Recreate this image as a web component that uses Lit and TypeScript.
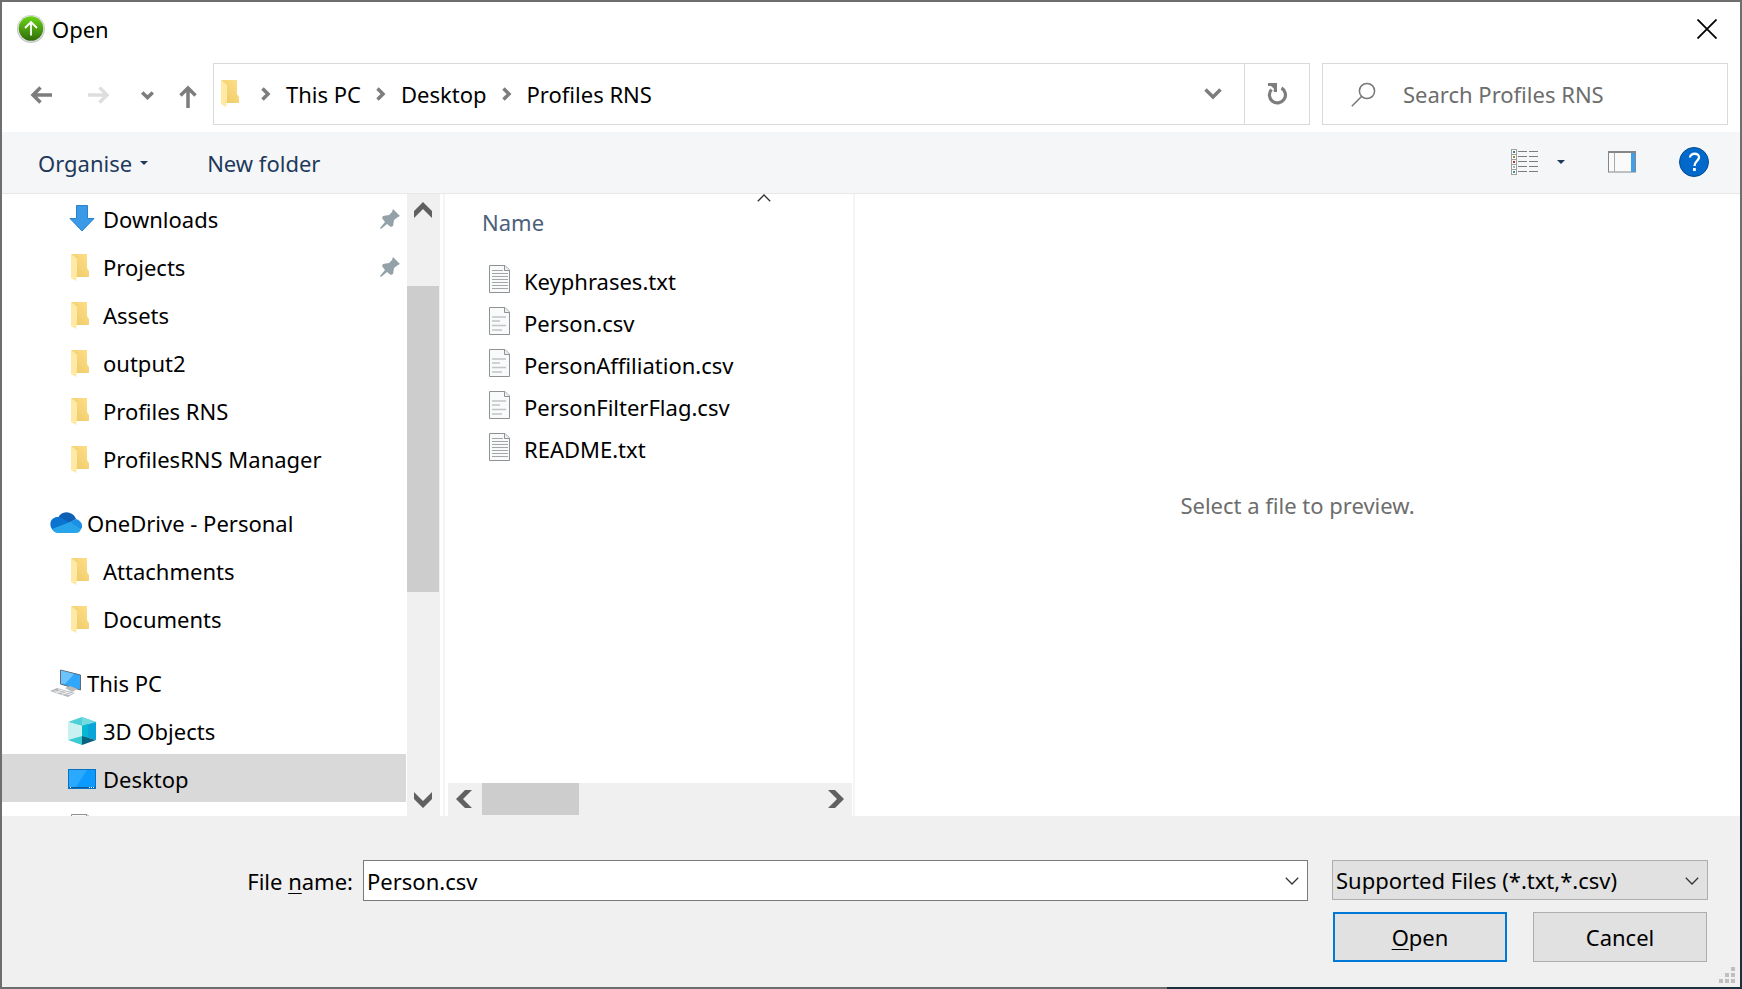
import { LitElement, html, css, svg, nothing } from "lit";
import { customElement, state } from "lit/decorators.js";

type IconName = "download" | "folder" | "cloud" | "pc" | "cube" | "desktop" | "document" | "txt" | "csv";

interface Place {
  label: string;
  icon: IconName;
  root?: boolean;
  pinned?: boolean;
}

const GROUPS: Place[][] = [
  [
    { label: "Downloads", icon: "download", pinned: true },
    { label: "Projects", icon: "folder", pinned: true },
    { label: "Assets", icon: "folder" },
    { label: "output2", icon: "folder" },
    { label: "Profiles RNS", icon: "folder" },
    { label: "ProfilesRNS Manager", icon: "folder" },
  ],
  [
    { label: "OneDrive - Personal", icon: "cloud", root: true },
    { label: "Attachments", icon: "folder" },
    { label: "Documents", icon: "folder" },
  ],
  [
    { label: "This PC", icon: "pc", root: true },
    { label: "3D Objects", icon: "cube" },
    { label: "Desktop", icon: "desktop" },
    { label: "", icon: "document" },
  ],
];

const FILES: { name: string; icon: IconName }[] = [
  { name: "Keyphrases.txt", icon: "txt" },
  { name: "Person.csv", icon: "csv" },
  { name: "PersonAffiliation.csv", icon: "csv" },
  { name: "PersonFilterFlag.csv", icon: "csv" },
  { name: "README.txt", icon: "txt" },
];

const sheet = svg`
  <path d="M.5 .5H16L20.500 5V27.500H.5Z" fill="#f9fafb" stroke="#8f9192"/>
  <path d="M15.500 .5V5.500H20.500" fill="#eceeef" stroke="#8f9192"/>`;

const ICONS: Record<IconName, unknown> = {
  folder: html`<svg width="19" height="28" viewBox="0 0 19 28" aria-hidden="true">
    <defs><linearGradient id="f" x1="0" y1="1" x2="1" y2="0"><stop offset="0" stop-color="#ecc862"/><stop offset="1" stop-color="#ffe08a"/></linearGradient></defs>
    <path d="M0 0H16V14L18 17V23H5V5Z" fill="url(#f)"/>
    <path d="M0 0L6 5V20L5 27L0 24Z" fill="#ffe9a6"/></svg>`,
  download: html`<svg width="28" height="27" viewBox="-1 0 28 27" aria-hidden="true">
    <path d="M7.500 .5H18.500V13.500H25L13 26L1 13.500H7.500Z" fill="#3a9ae8" stroke="#2b82cb"/></svg>`,
  cloud: html`<svg width="32" height="21" viewBox="0 0 32 21" aria-hidden="true">
    <path d="M8 6C10 1 15-1 20 1C23 2 25 4 26 7L17 12Z" fill="#0f5fb5"/>
    <path d="M2 17C-1 13 0 6 7 5C9 5 11 5 13 7L21 11L4 19Z" fill="#0b73d0"/>
    <path d="M20 10L26 7C30 8 33 12 32 16L28 19Z" fill="#1a8fe3"/>
    <path d="M2 17L20 10L31 17C30 20 28 21 26 21H8C5 21 3 19 2 17Z" fill="#28a4ea"/></svg>`,
  pc: html`<svg width="31" height="28" viewBox="0 0 31 28" aria-hidden="true">
    <path d="M10.500 1L30.500 6V21L10.500 15Z" fill="#31a7fb" stroke="#5f6a73"/>
    <path d="M11 1.500L24 5L15 15L11 14.500Z" fill="#6cc3ff"/>
    <path d="M15 19L20 17L28 20L22 23Z" fill="#b9bdc0"/>
    <path d="M0 22L7 19L25 24L18 28Z" fill="#b4b8bb"/>
    <path d="M4 22L21 26M8 20.500L23 25M6 24L12 21M12 25.500L18 23" stroke="#fff" stroke-width=".7"/></svg>`,
  cube: html`<svg width="28" height="28" viewBox="0 0 28 28" aria-hidden="true">
    <path d="M0 5L14 0L28 5L14 9Z" fill="#4fd0d6"/><path d="M14 0L28 5L14 9Z" fill="#73dbe0"/>
    <path d="M0 5L14 9V19L0 23Z" fill="#c9f1f1"/>
    <path d="M14 9L28 5V23L14 19Z" fill="#0aa5d8"/><path d="M14 9L20 7V21L14 19Z" fill="#05b8d2"/>
    <path d="M0 23L14 19V28Z" fill="#3bcbd3"/><path d="M14 19L28 23L14 28Z" fill="#07637e"/></svg>`,
  desktop: html`<svg width="28" height="20" viewBox="0 0 28 20" aria-hidden="true">
    <rect x=".5" y=".5" width="27" height="19" fill="#0d9aff" stroke="#0872c0"/>
    <path d="M1 1H19L8 18H1Z" fill="#2aa9ff"/><path d="M1 18.500H27" stroke="#0b5a99"/>
    <path d="M2 18.500H3M21 18.500H22M23 18.500H24M25 18.500H26" stroke="#fff"/></svg>`,
  document: html`<svg width="21" height="28" viewBox="0 0 21 28" aria-hidden="true">${sheet}
    <path d="M8 2V8M5 4.500H10" stroke="#1f88d8"/></svg>`,
  txt: html`<svg width="21" height="28" viewBox="0 0 21 28" aria-hidden="true">${sheet}
    <path d="M3 5.500H14M3 8.500H19M3 11.500H19M3 14.500H19M3 17.500H19M3 20.500H19M3 23.500H19" stroke="#a3a5a7"/></svg>`,
  csv: html`<svg width="21" height="28" viewBox="0 0 21 28" aria-hidden="true">${sheet}
    <path d="M3 10H17M3 14H11M3 18.500H17M3 23H13" stroke="#c2c4c6" stroke-width="1.500"/></svg>`,
};

const pin = html`<svg class="pin" width="20" height="20" viewBox="0 0 20 20" aria-hidden="true">
  <path d="M13 0L20 7L18 8L14 11L13 17L11 18L7 15L1 20L0 19L5 13L2 9L3 7L9 6L12 3Z" fill="#93a1a8"/></svg>`;

const bold = (d: string, w: number, h: number) =>
  html`<svg width=${w} height=${h} viewBox="0 0 ${w} ${h}" aria-hidden="true"><path d=${d} fill="none" stroke="currentColor" stroke-width="3.500"/></svg>`;

const solid = (d: string, w: number, h: number) =>
  html`<svg width=${w} height=${h} viewBox="0 0 ${w} ${h}" aria-hidden="true"><path d=${d} fill="currentColor"/></svg>`;

const thin = (d: string) =>
  html`<svg width="14" height="8" viewBox="0 0 14 8" aria-hidden="true"><path d=${d} fill="none" stroke="#333" stroke-width="1.300"/></svg>`;

@customElement("app-root")
export class AppRoot extends LitElement {
  @state() private selected = "Desktop";
  @state() private fileName = "Person.csv";

  static styles = css`
    :host {
      display: block;
      height: 100vh;
      font: 22px/30px "Noto Sans", "Open Sans", sans-serif;
      color: #000;
    }
    * { box-sizing: border-box; }
    svg { display: block; flex: none; }
    button, input, select { font: inherit; color: inherit; border: 0; background: none; padding: 0; margin: 0; border-radius: 0; }
    button { display: flex; align-items: center; }
    ul, ol { list-style: none; margin: 0; padding: 0; }
    .window {
      height: 100%;
      display: flex;
      flex-direction: column;
      border: 2px solid transparent;
      background:
        linear-gradient(#fff, #fff) padding-box,
        linear-gradient(to right, #6e6e6e 67%, #1d303e 67%) left bottom / 100% 2px no-repeat border-box,
        linear-gradient(#6e6e6e 30%, #5c5c5c 45%, #1d303e 68%) right top / 2px 100% no-repeat border-box,
        #6e6e6e border-box;
    }
    .title { display: flex; align-items: center; height: 56px; padding: 0 23px 2px 15px; gap: 7px; }
    .title h1 { font: inherit; margin: 0; flex: 1; }
    .nav { display: flex; height: 74px; padding: 5px 12px 7px 0; gap: 12px; color: #7d7d7d; }
    .steps { display: flex; align-items: center; width: 199px; padding: 2px 0 0 28px; }
    .steps .fwd { color: #dedede; margin-left: 35px; }
    .steps .recent { margin-left: 30px; }
    .steps .up { margin: 2px 0 0 25px; }
    .address { flex: 1; display: flex; border: 1px solid #d9d9d9; }
    .crumbs { flex: 1; display: flex; align-items: center; padding-left: 7px; gap: 15px; color: #000; }
    .crumbs li { display: flex; align-items: center; gap: 15px; }
    .crumbs li svg { color: #7d7d7d; }
    .crumbs .place-icon { margin-right: 6px; }
    .drop { padding: 0 22px; }
    .refresh { width: 65px; justify-content: center; border-left: 1px solid #d9d9d9; }
    .search { width: 406px; display: flex; align-items: center; gap: 27px; padding-left: 28px; border: 1px solid #d9d9d9; }
    .search input { flex: 1; min-width: 0; outline: 0; }
    .search input::placeholder { color: #6d6d6d; opacity: 1; }
    .tools {
      display: flex; align-items: center; height: 62px; padding: 0 31px 0 36px;
      background: #f4f6f8; border-bottom: 1px solid #e6e8ea; color: #1e395b;
    }
    .organise { gap: 8px; margin-right: 59px; }
    .views { margin-left: auto; gap: 19px; }
    .pane { margin: 0 43px; }
    .icon-button { padding-bottom: 2px; }
    .body { flex: 1; min-height: 0; display: flex; }
    .side { width: 404px; overflow: hidden; }
    .side ul + ul { margin-top: 16px; }
    .place { width: 100%; height: 48px; padding: 1px 6px 0 66px; text-align: left; }
    .place .glyph { width: 35px; display: flex; }
    .place .glyph.slim { padding: 2px 0 0 3px; }
    .place.root { padding-left: 48px; }
    .place.root .glyph { width: 37px; }
    .place.on { background: #d9d9d9; }
    .pin { margin-left: auto; }
    .bar { background: #f0f0f0; color: #606060; display: flex; }
    .bar.v { width: 34px; flex-direction: column; border-left: 1px solid #fff; padding-right: 1px; }
    .bar.h { height: 33px; margin: 0 1px 0 3px; padding-bottom: 1px; }
    .bar button { justify-content: center; }
    .bar.v button { height: 32px; }
    .bar.h button { width: 34px; padding-right: 2px; }
    .bar.h .track + button { padding: 0 0 0 2px; }
    .track { flex: 1; display: flex; }
    .bar.v .track { flex-direction: column; padding-top: 60px; }
    .thumb { background: #cdcdcd; }
    .bar.v .thumb { height: 61.400%; }
    .bar.h .thumb { width: 29%; }
    .list { width: 412px; display: flex; flex-direction: column; border: 0 solid #f5f5f5; border-width: 0 2px; margin-left: 3px; }
    .list table { border-collapse: collapse; width: 100%; }
    .list th, .list td { padding: 0; text-align: left; font-weight: 400; }
    .head { color: #4c607a; }
    .head button { width: 100%; height: 66px; padding: 0 0 11px 37px; display: grid; grid-template-columns: 275px 1fr; }
    .head button span { text-align: left; }
    .head button svg { align-self: start; }
    .file { display: flex; align-items: center; height: 42px; gap: 14px; padding-left: 44px; }
    .file svg { margin-bottom: 5px; }
    .fill { flex: 1; }
    .preview { flex: 1; display: flex; align-items: center; justify-content: center; color: #6d6d6d; margin: 0; }
    .foot {
      background: #f0f0f0; display: grid; grid-template-columns: 351px 1fr 376px;
      padding: 44px 32px 25px 0; row-gap: 11px; column-gap: 10px; position: relative;
    }
    .foot label { text-align: right; align-self: center; }
    .combo { display: flex; align-items: center; height: 41px; background: #fff; border: 1px solid #7a7a7a; padding: 0 8px 0 3px; margin-right: 14px; }
    .combo input { flex: 1; min-width: 0; outline: 0; }
    .filter { display: grid; align-items: start; }
    .filter > * { grid-area: 1 / 1; }
    .filter select { appearance: none; width: 100%; height: 40px; background: #e1e1e1; border: 1px solid #adadad; padding: 0 30px 0 3px; }
    .filter svg { place-self: center end; margin-right: 9px; pointer-events: none; }
    .actions { grid-column: 3; display: grid; grid-template-columns: 1fr 1fr; gap: 26px; padding: 0 1px; }
    .actions button { height: 50px; justify-content: center; background: #e1e1e1; border: 1px solid #adadad; }
    .actions .primary { border: 2px solid #0078d7; }
    .key { text-decoration: underline; text-decoration-thickness: 1px; text-underline-offset: 3px; }
    .grip { position: absolute; right: 5px; bottom: 4px; }
  `;

  private crumb(label: string) {
    return html`<li>${bold("M1.500 1.500L7 7L1.500 12.500", 10, 14)}<button>${label}</button></li>`;
  }

  private place(p: Place) {
    const slim = p.icon === "folder" || p.icon === "document";
    return html`<li><button
      class="place ${p.root ? "root" : ""} ${p.label === this.selected ? "on" : ""}"
      aria-label=${p.label || "Documents"}
      @click=${() => (this.selected = p.label)}
      ><span class="glyph ${slim ? "slim" : ""}">${ICONS[p.icon]}</span><span>${p.label}</span>${p.pinned ? pin : nothing}</button></li>`;
  }

  render() {
    return html`<main class="window">
      <header class="title">
        <svg width="28" height="28" viewBox="0 0 28 28" aria-hidden="true">
          <defs><linearGradient id="g" x1="0" y1="0" x2="0" y2="1"><stop offset="0" stop-color="#6bd416"/><stop offset="1" stop-color="#2f6c0b"/></linearGradient></defs>
          <circle cx="14" cy="14" r="14" fill="#c9c9cd"/><circle cx="14" cy="13.500" r="13" fill="#ececf0"/>
          <circle cx="14" cy="13.500" r="12.300" fill="url(#g)"/>
          <path d="M14 20.500V7.500M8 13L14 7L20 13" fill="none" stroke="#fff" stroke-width="1.800"/></svg>
        <h1>Open</h1>
        <button aria-label="Close"><svg width="20" height="20" viewBox="0 0 20 20" aria-hidden="true"><path d="M.5 .5L19.500 19.500M19.500 .5L.5 19.500" stroke="#000" stroke-width="1.800"/></svg></button>
      </header>

      <nav class="nav">
        <div class="steps">
          <button aria-label="Back">${bold("M22 9H3M10.500 1.500L3 9L10.500 16.500", 23, 18)}</button>
          <button class="fwd" aria-label="Forward">${bold("M0 9H19M11.500 1.500L19 9L11.500 16.500", 23, 18)}</button>
          <button class="recent" aria-label="Recent locations">${bold("M1.200 1.500L6.500 6.500L11.800 1.500", 13, 9)}</button>
          <button class="up" aria-label="Up">${bold("M9 23V3M1.500 10.500L9 3L16.500 10.500", 18, 23)}</button>
        </div>
        <div class="address">
          <ol class="crumbs"><li class="place-icon">${ICONS.folder}</li>${["This PC", "Desktop", "Profiles RNS"].map((c) => this.crumb(c))}</ol>
          <button class="drop" aria-label="Previous locations">${bold("M1.500 1.500L9 9L16.500 1.500", 18, 12)}</button>
          <button class="refresh" aria-label="Refresh"><svg width="20" height="22" viewBox="0 0 20 22" aria-hidden="true"><path d="M14.500 5A8 8 0 1 1 4.500 6.500" fill="none" stroke="currentColor" stroke-width="3.200"/><path d="M1 0H10V9H6.800V5.500L4 3H1Z" fill="currentColor"/></svg></button>
        </div>
        <div class="search">
          <svg width="25" height="25" viewBox="0 0 25 25" aria-hidden="true"><circle cx="16" cy="9" r="7.600" fill="none" stroke="#777" stroke-width="1.500"/><path d="M10.500 14.500L.8 24.200" stroke="#777" stroke-width="1.500"/></svg>
          <input type="search" aria-label="Search Profiles RNS" placeholder="Search Profiles RNS" />
        </div>
      </nav>

      <div class="tools">
        <button class="organise">Organise ${solid("M0 0H8L4 4Z", 8, 4)}</button>
        <button>New folder</button>
        <button class="views icon-button" aria-label="Change your view">
          <svg width="27" height="26" viewBox="0 0 27 26" aria-hidden="true">
            ${[0, 1, 2, 3, 4].map((i) => svg`
              <rect x=".5" y=${i * 5 + 0.5} width="5" height="5" fill="#fff" stroke="#a0a0a0"/>
              <rect x="2" y=${i * 5 + 2} width="2" height="2" fill=${["#2f7f8f", "#8c8a3a", "#b5351f", "#a5b0bb", "#3a8f9a"][i]}/>
              <path d="M7 ${i * 5 + 2.5}H16M18 ${i * 5 + 2.5}H27" stroke="#7c7c7c"/>`)}
          </svg>
          ${solid("M0 0H8L4 4Z", 8, 4)}
        </button>
        <button class="pane icon-button" aria-label="Hide the preview pane">
          <svg width="28" height="22" viewBox="0 0 28 22" aria-hidden="true"><rect x=".5" y=".5" width="27" height="20.500" fill="#fafafa" stroke="#868686"/><path d="M0 1H28" stroke="#868686" stroke-width="2"/><path d="M6.500 2V21" stroke="#a9a9a9"/><rect x="23" y="2" width="4" height="19" fill="#3f9fe8"/></svg>
        </button>
        <button class="icon-button" aria-label="Get help">
          <svg width="30" height="30" viewBox="0 0 30 30" aria-hidden="true"><circle cx="15" cy="15" r="14.500" fill="#0069cb" stroke="#0a4a8a"/><path d="M11 10.500C11 5.500 20.500 5.500 20 10.500C19.500 14 15.500 14.500 15.500 19" fill="none" stroke="#fff" stroke-width="2.300"/><rect x="14" y="21" width="2.800" height="3" fill="#fff"/></svg>
        </button>
      </div>

      <section class="body">
        <nav class="side">${GROUPS.map((g) => html`<ul>${g.map((p) => this.place(p))}</ul>`)}</nav>
        <div class="bar v">
          <button aria-label="Scroll up">${solid("M9 0L18 9V16L9 7L0 16V9Z", 18, 16)}</button>
          <div class="track"><div class="thumb"></div></div>
          <button aria-label="Scroll down">${solid("M9 16L18 7V0L9 9L0 0V7Z", 18, 16)}</button>
        </div>
        <div class="list">
          <table>
            <thead><tr><th class="head"><button><span>Name</span>${thin("M.8 7.200L7 1L13.200 7.200")}</button></th></tr></thead>
            <tbody>${FILES.map((f) => html`<tr><td><div class="file">${ICONS[f.icon]}<span>${f.name}</span></div></td></tr>`)}</tbody>
          </table>
          <div class="fill"></div>
          <div class="bar h">
            <button aria-label="Scroll left">${solid("M0 9L9 0H16L7 9L16 18H9Z", 16, 18)}</button>
            <div class="track"><div class="thumb"></div></div>
            <button aria-label="Scroll right">${solid("M16 9L7 0H0L9 9L0 18H7Z", 16, 18)}</button>
          </div>
        </div>
        <p class="preview">Select a file to preview.</p>
      </section>

      <footer class="foot">
        <label for="file">File <span class="key">n</span>ame:</label>
        <div class="combo">
          <input id="file" .value=${this.fileName} @input=${(e: Event) => (this.fileName = (e.target as HTMLInputElement).value)} />
          <button aria-label="Show file names">${thin("M.8 .8L7 7L13.200 .8")}</button>
        </div>
        <div class="filter">
          <select aria-label="File type"><option>Supported Files (*.txt,*.csv)</option></select>
          ${thin("M.8 .8L7 7L13.200 .8")}
        </div>
        <div class="actions">
          <button class="primary"><span><span class="key">O</span>pen</span></button>
          <button>Cancel</button>
        </div>
        <svg class="grip" width="16" height="16" viewBox="0 0 16 16" aria-hidden="true"><path d="M12 0h4v4h-4zM6 6h4v4h-4zM12 6h4v4h-4zM0 12h4v4h-4zM6 12h4v4h-4zM12 12h4v4h-4z" fill="#bfbfbf"/></svg>
      </footer>
    </main>`;
  }
}
